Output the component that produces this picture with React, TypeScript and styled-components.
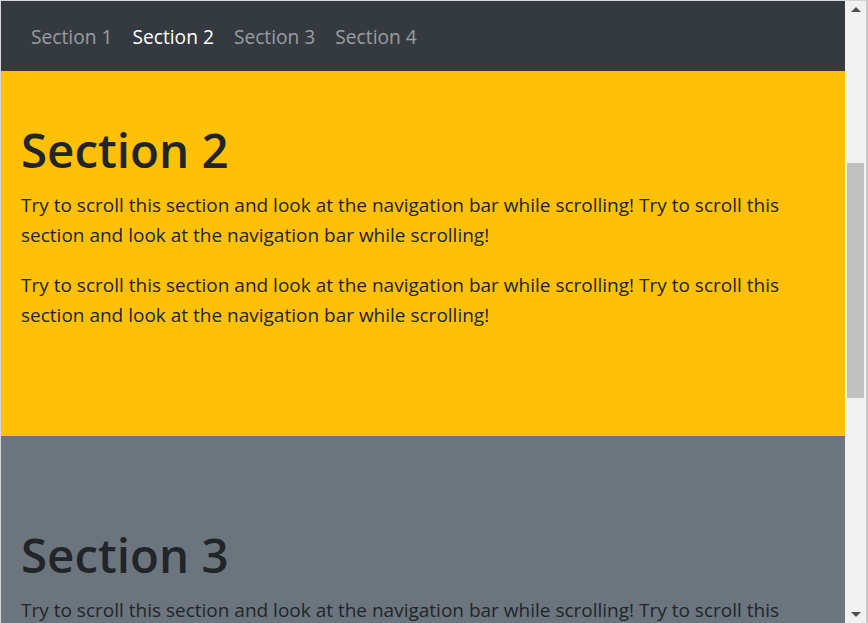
import React from "react";
import styled, { createGlobalStyle } from "styled-components";

const Global = createGlobalStyle`
  html, body { margin: 0; padding: 0; overflow: hidden; background: #fff; }
  * { box-sizing: border-box; }
`;

const Frame = styled.div`
  width: 868px;
  height: 623px;
  display: flex;
  border-top: 1px solid #d6d6d6;
  border-left: 1px solid #d6d6d6;
  font-family: "Open Sans", "Noto Sans", sans-serif;
  color: #212529;
  overflow: hidden;
`;

const Main = styled.div`
  flex: 1;
  display: flex;
  flex-direction: column;
  min-width: 0;
`;

const Navbar = styled.nav`
  height: 70px;
  flex: none;
  background: #343a40;
  padding: 10px 20px;
  display: flex;
  align-items: center;
`;

const NavList = styled.ul`
  list-style: none;
  margin: 0;
  padding: 0;
  display: flex;
`;

const NavLink = styled.a<{ $active?: boolean }>`
  display: block;
  padding: 11px 10px 9px;
  font-size: 19.2px;
  line-height: 30px;
  text-decoration: none;
  color: ${(p) => (p.$active ? "#ffffff" : "rgba(255,255,255,0.5)")};
`;

const Viewport = styled.div`
  flex: 1;
  overflow: hidden;
`;

const Track = styled.div<{ $scroll: number }>`
  margin-top: ${(p) => -p.$scroll}px;
`;

const Section = styled.section<{ $bg: string }>`
  background: ${(p) => p.$bg};
  padding: 89px 20px 86px;
`;

const Heading = styled.h1`
  margin: 0 0 10px;
  font-size: 47.5px;
  line-height: 60px;
  font-weight: 600;
`;

const Para = styled.p`
  margin: 0 0 20px;
  font-size: 19px;
  line-height: 30px;
`;

const Scrollbar = styled.div`
  width: 21px;
  flex: none;
  background: #f1f1f1;
  display: flex;
  flex-direction: column;
  align-items: center;
  border-right: 2px solid #c8c8c8;
  box-sizing: content-box;
`;

const Arrow = styled.div`
  height: 17px;
  flex: none;
  display: flex;
  align-items: center;
  justify-content: center;
  width: 100%;
`;

const Tri = styled.span<{ $down?: boolean }>`
  width: 0;
  height: 0;
  border-left: 5px solid transparent;
  border-right: 5px solid transparent;
  ${(p) =>
    p.$down
      ? "border-top: 5px solid #505050;"
      : "border-bottom: 5px solid #505050;"}
`;

const ScrollTrack = styled.div`
  flex: 1;
  width: 100%;
  padding: 0 2px;
`;

const Thumb = styled.div<{ $top: number; $height: number }>`
  margin-top: ${(p) => p.$top}px;
  height: ${(p) => p.$height}px;
  background: #c1c1c1;
`;

const text =
  "Try to scroll this section and look at the navigation bar while scrolling! Try to scroll this section and look at the navigation bar while scrolling!";

export default function App() {
  const links = ["Section 1", "Section 2", "Section 3", "Section 4"];
  return (
    <>
      <Global />
      <Frame>
        <Main>
          <Navbar>
            <NavList>
              {links.map((l) => (
                <li key={l}>
                  <NavLink href={"#" + l} $active={l === "Section 2"}>
                    {l}
                  </NavLink>
                </li>
              ))}
            </NavList>
          </Navbar>
          <Viewport>
            <Track $scroll={40}>
              <Section $bg="#ffc107">
                <Heading>Section 2</Heading>
                <Para>{text}</Para>
                <Para>{text}</Para>
              </Section>
              <Section $bg="#6c757d">
                <Heading>Section 3</Heading>
                <Para>{text}</Para>
                <Para>{text}</Para>
              </Section>
            </Track>
          </Viewport>
        </Main>
        <Scrollbar>
          <Arrow>
            <Tri />
          </Arrow>
          <ScrollTrack>
            <Thumb $top={145} $height={235} />
          </ScrollTrack>
          <Arrow>
            <Tri $down />
          </Arrow>
        </Scrollbar>
      </Frame>
    </>
  );
}
